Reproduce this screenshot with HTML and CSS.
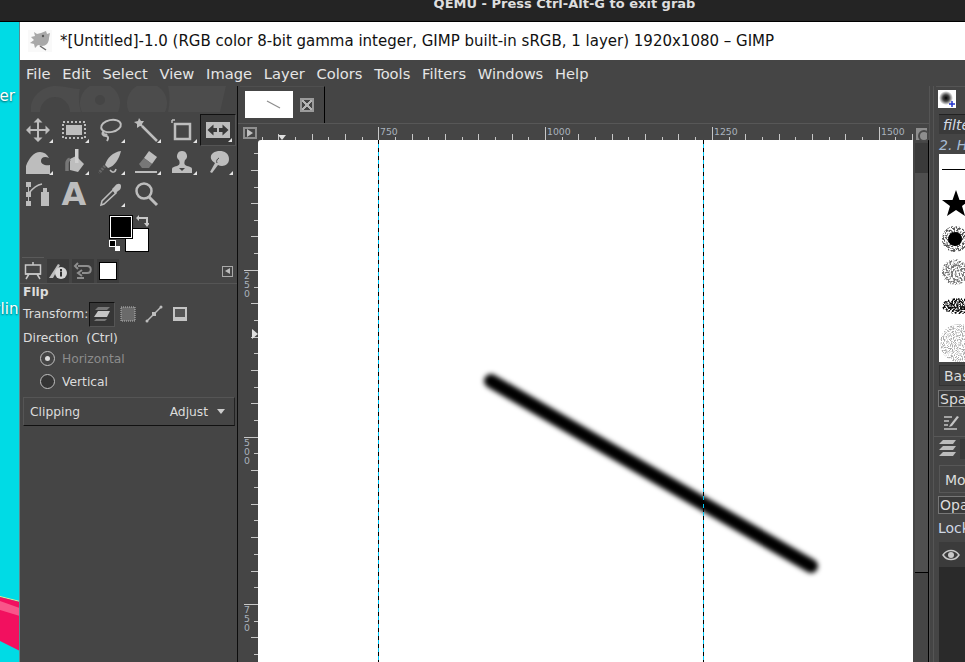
FILE: index.html
```html
<!DOCTYPE html>
<html lang="en">
<head>
  <meta charset="UTF-8">
  <title>GIMP</title>
  <link rel="stylesheet" href="styles.css">
</head>
<body>
  <div class="qemu-bar"><span>QEMU - Press Ctrl-Alt-G to exit grab</span></div>

  <div class="desktop">
    <div class="wallpaper">
      <span class="desk-label desk-label-1">Trash ter</span>
      <span class="desk-label desk-label-2">Styling</span>
      <svg class="wall-shape" viewBox="0 0 20 70" width="20" height="70">
        <polygon points="0,2 20,7 20,8 0,3" fill="#f4e98a"/>
        <polygon points="0,3 20,8 20,57 0,47" fill="#f2105f"/>
        <polygon points="0,7 20,14 20,22 0,16" fill="#f9558a"/>
      </svg>
    </div>

    <div class="window">
      <div class="titlebar">
        <svg class="wilber" viewBox="0 0 24 22" width="24" height="22">
          <rect width="24" height="22" fill="#f9f9f9"/>
          <path d="M6 2l3 2 4-1 5-2 1 3 3-1-1 5c0 5-3 8-7 8l-4-1-3 3-1-4-4-1 4-3-3-3 4-1z" fill="#a8a8a8"/>
          <path d="M12 16l6 4" stroke="#6d6d6d" stroke-width="1.500"/>
          <circle cx="15" cy="6" r="1.200" fill="#555"/>
        </svg>
        <span>*[Untitled]-1.0 (RGB color 8-bit gamma integer, GIMP built-in sRGB, 1 layer) 1920x1080 – GIMP</span>
      </div>

      <div class="menubar">
        <span>File</span><span>Edit</span><span>Select</span><span>View</span><span>Image</span><span>Layer</span><span>Colors</span><span>Tools</span><span>Filters</span><span>Windows</span><span>Help</span>
      </div>

      <div class="workspace">
        <div class="dock-left">
          <svg class="wilber-band" viewBox="0 0 218 28" width="218" height="28">
            <g fill="#4c4c4c">
              <path d="M11 26v-6C13 8 24 0 36 0c10 0 15 3 24 3-2 6-1 16 1 23H50a15 15 0 0 0-30 0z"/>
              <path d="M62 26a20 20 0 1 1 36 0zM75 14a5 5 0 1 0 10 0 5 5 0 1 0-10 0z" fill-rule="evenodd"/>
              <path d="M109 26a20 20 0 1 1 36 0z"/>
              <path d="M148 0h58l-6 26h-52c2-9 2-18 0-26z"/>
            </g>
          </svg>

          <div class="tools">
            <div class="tool has-menu"><svg class="ico" viewBox="0 0 24 24"><path d="M12 0l4.500 4.500H13V11h6.500V7.500L24 12l-4.500 4.500V13H13v6.500h3.500L12 24l-4.500-4.500H11V13H4.500v3.500L0 12l4.500-4.500V11H11V4.500H7.500z"/></svg></div>
            <div class="tool has-menu"><svg class="ico" viewBox="0 0 24 24"><rect x="1" y="4" width="22" height="16" fill="none" stroke="#bdbdbd" stroke-width="2" stroke-dasharray="2 2"/><rect x="4" y="7" width="16" height="10"/></svg></div>
            <div class="tool has-menu"><svg class="ico" viewBox="0 0 24 24"><g fill="none" stroke="#bdbdbd" stroke-width="2"><ellipse cx="13" cy="8" rx="10" ry="6" transform="rotate(-12 13 8)"/><path d="M6 13c-3 3-1 5 2 5 2 0 3 2 1 5"/><path d="M5 14c0 3 3 3 4 2"/></g></svg></div>
            <div class="tool has-menu"><svg class="ico" viewBox="0 0 24 24"><polygon points="5,0 7,3 10,3 8,6 9,9 6,8 3,10 3,6 0,4 4,3"/><path d="M8 8l15 15" stroke="#bdbdbd" stroke-width="2.500"/></svg></div>
            <div class="tool has-menu"><svg class="ico" viewBox="0 0 24 24"><g fill="none" stroke="#bdbdbd"><path d="M5 6h15v15H5z" stroke-width="2.500"/><path d="M2 2h3M2 2v3" stroke-width="1.500"/></g></svg></div>
            <div class="tool tool-active has-menu"><svg class="ico" viewBox="0 0 24 24"><rect x="0" y="4" width="24" height="16"/><path d="M1.500 12l6-5.500v3.500h3.500v4H7.500v3.500zM22.500 12l-6-5.500v3.500H13v4h3.500v3.500z" fill="#3a3a3a"/></svg></div>

            <div class="tool has-menu"><svg class="ico" viewBox="0 0 24 24"><path d="M0 24v-8C3 8 8 2 14 2c4 0 7 2 9 6-4-2-8-1-8 3 0 3 4 5 9 4v9z"/></svg></div>
            <div class="tool has-menu"><svg class="ico" viewBox="0 0 24 24"><path d="M8 9l6-3 8 8-6 8-8-2z"/><path d="M5 21v-8c0-2 1-3 3-4" fill="none" stroke="#777" stroke-width="3.500"/><rect x="13" y="-1" width="3.500" height="14" fill="#cfcfcf"/></svg></div>
            <div class="tool has-menu"><svg class="ico" viewBox="0 0 24 24"><path d="M23 1C15 2 9 8 7 15l3 3C17 16 21 9 23 1z"/><path d="M7 16l-6 7" stroke="#666" stroke-width="3" stroke-dasharray="2 1"/><path d="M12 20c2 3 5 3 6-1" fill="none" stroke="#bdbdbd" stroke-width="1.500"/></svg></div>
            <div class="tool has-menu"><svg class="ico" viewBox="0 0 24 24"><path d="M15 1l8 6-5 7-8-6z"/><path d="M10 8l8 6-3 4H8l-3-4z" fill="#777"/><rect x="1" y="21" width="22" height="2"/></svg></div>
            <div class="tool has-menu"><svg class="ico" viewBox="0 0 24 24"><path d="M12 1a5 5 0 0 1 3 9c-1 3-1 5 2 6s5 1 5 3v4H2v-4c0-2 2-2 5-3s3-3 2-6a5 5 0 0 1 3-9z"/><path d="M9 18h6l-3 3z" fill="#454545"/></svg></div>
            <div class="tool has-menu"><svg class="ico" viewBox="0 0 24 24"><path d="M7 3c6-4 16-2 16 6 0 7-7 8-11 6l-6 8-2-1 5-9C5 11 3 6 7 3z"/><path d="M13 8c-2 1-3 3-2 5" fill="none" stroke="#454545"/></svg></div>

            <div class="tool"><svg class="ico" viewBox="0 0 24 24"><rect x="0" y="0" width="5" height="5"/><rect x="0" y="10" width="5" height="5"/><rect x="0" y="19" width="5" height="5"/><path d="M2.500 3v18" stroke="#bdbdbd"/><path d="M3 11C7 6 11 3 16 2" fill="none" stroke="#bdbdbd" stroke-width="1.500"/><path d="M15 10h2V6h4v4h2v14h-8z"/></svg></div>
            <div class="tool tool-text">A</div>
            <div class="tool has-menu"><svg class="ico" viewBox="0 0 24 24"><path d="M3 23l1-4L15 8l3 3L6 22z" fill="none" stroke="#bdbdbd" stroke-width="1.500"/><path d="M14 7l3-3c2-3 6-3 6 0s-1 4-3 5l-3 3z"/></svg></div>
            <div class="tool"><svg class="ico" viewBox="0 0 24 24"><circle cx="10" cy="9" r="7.500" fill="none" stroke="#bdbdbd" stroke-width="2.500"/><path d="M15 15l8 8" stroke="#bdbdbd" stroke-width="3"/></svg></div>
          </div>

          <div class="colors">
            <div class="swatch swatch-bg"></div>
            <div class="swatch swatch-fg"></div>
            <div class="mini-default"></div>
            <svg class="swap" viewBox="0 0 13 13" width="13" height="13"><path d="M0 3l3-3v2h9v6h2l-3 4-3-4h2V4H3v2z" fill="#c8c8c8"/></svg>
          </div>

          <div class="dock-tabs">
            <div class="dock-tab dock-tab-on"><svg viewBox="0 0 18 18" width="18" height="18"><g fill="none" stroke="#c8c8c8" stroke-width="1.500"><rect x="1.500" y="3" width="15" height="9"/><path d="M9 0v3M5 12l-3 5M13 12l3 5M1 12h16"/></g></svg></div>
            <div class="dock-tab"><svg viewBox="0 0 20 18" width="20" height="18"><path d="M1 16l9-14 2 1-7 13z" fill="#bdbdbd"/><circle cx="13" cy="11" r="6" fill="#d6d6d6"/><rect x="12" y="9.500" width="2" height="5" fill="#333"/><rect x="12" y="7" width="2" height="2" fill="#333"/></svg></div>
            <div class="dock-tab"><svg viewBox="0 0 20 18" width="20" height="18"><g fill="none" stroke="#8e8e8e" stroke-width="2"><path d="M5 4h9c5 0 5 7 0 7H9"/><path d="M5 1L2 4l3 3M9 8l-4 3 4 3"/><path d="M4 16h7"/></g></svg></div>
            <div class="dock-tab"><div class="tab-thumb"></div></div>
            <div class="dock-tabs-end"><div class="dock-menu-btn"></div></div>
          </div>

          <div class="options">
            <div class="opt-title">Flip</div>
            <div class="opt-row">
              <span>Transform:</span>
              <div class="mode mode-on"><svg viewBox="0 0 18 18" width="18" height="18"><path d="M5 2h12l-3 3H2z" fill="#777"/><path d="M5 6h12l-3 6H1z" fill="#c4c4c4"/><path d="M3 14h11l-2 2H1z" fill="#777"/></svg></div>
              <div class="mode"><svg viewBox="0 0 16 16" width="16" height="16"><rect x="1" y="1" width="14" height="14" fill="#6a6a6a" stroke="#bbb" stroke-dasharray="1 1"/></svg></div>
              <div class="mode"><svg viewBox="0 0 18 18" width="18" height="18"><path d="M2 16L16 2" stroke="#bdbdbd" stroke-width="1.500"/><rect x="7" y="7" width="4" height="4" fill="#bdbdbd"/><circle cx="2" cy="16" r="1.500" fill="#bdbdbd"/><circle cx="16" cy="2" r="1.500" fill="#bdbdbd"/></svg></div>
              <div class="mode"><svg viewBox="0 0 16 16" width="16" height="16"><rect x="1" y="1" width="14" height="14" fill="#c4c4c4"/><rect x="3" y="3" width="10" height="8" fill="#555"/></svg></div>
            </div>
            <div class="opt-label">Direction  (Ctrl)</div>
            <div class="radio radio-on"><i></i><span>Horizontal</span></div>
            <div class="radio"><i></i><span>Vertical</span></div>
            <div class="opt-combo">
              <span>Clipping</span>
              <span class="combo-value">Adjust <b></b></span>
            </div>
          </div>
        </div>

        <div class="image-area">
          <div class="img-tabs">
            <div class="img-tab">
              <div class="img-thumb"><svg viewBox="0 0 48 27" width="48" height="27"><path d="M22 10l13 7" stroke="#8d8d8d" stroke-width="1.200"/></svg></div>
              <div class="img-close"></div>
            </div>
          </div>
          <div class="img-grid">
            <div class="corner-btn"><div class="corner-inner"></div></div>
            <svg class="ruler-top" viewBox="258 124 655 16" width="655" height="16">
              <path class="tick" d="M378.500 127v13M545.500 127v13M712.500 127v13M879.500 127v13"/>
              <path class="tick" d="M278.500 134v6M312.500 134v6M345.500 134v6M412.500 134v6M445.500 134v6M478.500 134v6M512.500 134v6M578.500 134v6M612.500 134v6M645.500 134v6M678.500 134v6M745.500 134v6M779.500 134v6M812.500 134v6M845.500 134v6M912.500 134v6"/>
              <path class="tick" d="M262.500 137v3M295.500 137v3M328.500 137v3M362.500 137v3M395.500 137v3M428.500 137v3M462.500 137v3M495.500 137v3M528.500 137v3M562.500 137v3M595.500 137v3M628.500 137v3M662.500 137v3M695.500 137v3M729.500 137v3M762.500 137v3M795.500 137v3M829.500 137v3M862.500 137v3M895.500 137v3"/>
              <polygon points="278,135 286,135 282,140" fill="#e0e0e0"/>
              <g class="ruler-num">
                <text x="380" y="135">750</text>
                <text x="547" y="135">1000</text>
                <text x="714" y="135">1250</text>
                <text x="881" y="135">1500</text>
              </g>
            </svg>
            <div class="nav-btn"><div class="nav-ring"></div></div>

            <svg class="ruler-left" viewBox="238 140 20 522" width="20" height="522">
              <path class="tick" d="M244 270.500h14M244 437.500h14M244 604.500h14"/>
              <path class="tick" d="M251 170.500h7M251 203.500h7M251 236.500h7M251 303.500h7M251 337.500h7M251 370.500h7M251 403.500h7M251 470.500h7M251 504.500h7M251 537.500h7M251 571.500h7M251 637.500h7"/>
              <path class="tick" d="M254 153.500h4M254 187.500h4M254 220.500h4M254 253.500h4M254 287.500h4M254 320.500h4M254 353.500h4M254 387.500h4M254 420.500h4M254 453.500h4M254 487.500h4M254 520.500h4M254 554.500h4M254 587.500h4M254 621.500h4M254 654.500h4"/>
              <polygon points="252,329 258,334 252,339" fill="#e0e0e0"/>
              <g class="ruler-num">
                <text x="244" y="279">2</text><text x="244" y="288">5</text><text x="244" y="297">0</text>
                <text x="244" y="446">5</text><text x="244" y="455">0</text><text x="244" y="464">0</text>
                <text x="244" y="613">7</text><text x="244" y="622">5</text><text x="244" y="631">0</text>
              </g>
            </svg>

            <div class="canvas">
              <svg class="stroke" viewBox="0 0 655 522" width="655" height="522">
                <defs><filter id="soft" x="-10%" y="-10%" width="120%" height="120%"><feGaussianBlur stdDeviation="2.500"/></filter></defs>
                <line x1="233" y1="241" x2="553" y2="426" stroke="#000" stroke-width="14" stroke-linecap="round" filter="url(#soft)"/>
              </svg>
              <div class="guide guide-1"></div>
              <div class="guide guide-2"></div>
            </div>

            <div class="scroll-v"><div class="scroll-thumb"></div></div>
          </div>
        </div>

        <div class="dock-right">
          <div class="r-tabs">
            <div class="r-brush-tab"><svg viewBox="0 0 18 18" width="18" height="18"><defs><radialGradient id="dot"><stop offset="0" stop-color="#000"/><stop offset=".45" stop-color="#444"/><stop offset="1" stop-color="#fff"/></radialGradient></defs><rect width="18" height="18" fill="#fff"/><circle cx="8" cy="8" r="7" fill="url(#dot)"/><path d="M14 11v6M11 14h6" stroke="#2233cc" stroke-width="1.500"/></svg></div>
          </div>
          <div class="r-filter">filter</div>
          <div class="r-caption">2. Hardness 050</div>
          <div class="r-brushes">
            <svg viewBox="0 0 26 208" width="26" height="208">
              <defs>
                <filter id="noisy" x="0" y="0" width="100%" height="100%"><feTurbulence type="fractalNoise" baseFrequency=".55" numOctaves="2" seed="4" result="n"/><feColorMatrix in="n" type="matrix" values="0 0 0 0 0 0 0 0 0 0 0 0 0 0 0 0 0 0 6 -2.600" result="t"/><feComposite in="SourceGraphic" in2="t" operator="in"/></filter>
                <filter id="noisy2" x="0" y="0" width="100%" height="100%"><feTurbulence type="fractalNoise" baseFrequency=".9" numOctaves="1" seed="9" result="n"/><feColorMatrix in="n" type="matrix" values="0 0 0 0 0 0 0 0 0 0 0 0 0 0 0 0 0 0 6 -2.800" result="t"/><feComposite in="SourceGraphic" in2="t" operator="in"/></filter>
              </defs>
              <rect x="3" y="15" width="23" height="1" fill="#000"/>
              <polygon points="17,36 20.500,46 31,46 23,52 26,62 17,56 8,62 11,52 3,46 13.500,46"/>
              <circle cx="16" cy="85" r="13" fill="#555" filter="url(#noisy)"/>
              <circle cx="16" cy="85" r="7" fill="#000"/>
              <circle cx="16" cy="118" r="13" fill="#777" filter="url(#noisy)"/>
              <ellipse cx="20" cy="152" rx="17" ry="8" fill="#000" filter="url(#noisy)"/>
              <ellipse cx="20" cy="152" rx="16" ry="6" fill="#222" filter="url(#noisy2)"/>
              <circle cx="20" cy="189" r="19" fill="#aaa" filter="url(#noisy2)"/>
            </svg>
          </div>
          <div class="r-combo">Basic,</div>
          <div class="r-spin">Spacing</div>
          <div class="r-edit"><svg viewBox="0 0 16 16" width="16" height="16"><path d="M1 3h8M1 7h5M1 11h4M1 15h13" stroke="#c4c4c4" stroke-width="1.500"/><path d="M7 11l7-9 2 1-7 9-3 1z" fill="#c4c4c4"/></svg></div>
          <div class="r-sep"></div>
          <div class="r-tabs r-tabs-2">
            <div class="r-layer-tab"><svg viewBox="0 0 17 18" width="17" height="18"><path d="M4 1h13l-3 4H0z" fill="#bdbdbd"/><path d="M4 7h13l-3 4H0z" fill="#bdbdbd"/><path d="M4 13h13l-3 4H0z" fill="#bdbdbd"/></svg></div>
            <div class="r-tab-stub"></div>
          </div>
          <div class="r-combo r-mode">Mode</div>
          <div class="r-spin r-opacity">Opacity</div>
          <div class="r-lock">Lock:</div>
          <div class="r-layer"><svg viewBox="0 0 18 12" width="18" height="12"><path d="M1 6c4-6 12-6 16 0-4 6-12 6-16 0z" fill="none" stroke="#c8c8c8" stroke-width="1.500"/><circle cx="9" cy="6" r="3" fill="#c8c8c8"/></svg></div>
          <div class="r-list"></div>
        </div>
      </div>
    </div>
  </div>
</body>
</html>
```

FILE: styles.css
```css
* { box-sizing: border-box; }
html, body { margin: 0; height: 100%; }
body { width: 965px; height: 662px; overflow: hidden; display: flex; flex-direction: column; font-family: "DejaVu Sans", sans-serif; background: #242424; }

.qemu-bar { height: 22px; background: #242424; border-bottom: 1px solid #000; text-align: center; overflow: hidden; padding-left: 164px; color: #dedede; font-size: 13px; font-weight: bold; line-height: 8px; }

.desktop { flex: 1; display: flex; min-height: 0; }
.wallpaper { width: 20px; background: #00dbe5; position: relative; overflow: hidden; border-right: 1px solid #5a8a90; }
.desk-label { position: absolute; color: #fff; font-size: 15px; white-space: nowrap; text-shadow: 0 1px 2px rgba(0, 0, 0, .6); }
.desk-label-1 { top: 65px; right: 4px; }
.desk-label-2 { top: 278px; right: -9px; }
.wall-shape { position: absolute; left: 0; top: 572px; }

.window { flex: 1; display: flex; flex-direction: column; min-width: 0; }
.titlebar { height: 38px; background: #fff; display: flex; align-items: center; padding-left: 8px; gap: 8px; font-size: 15px; color: #111; white-space: nowrap; }
.menubar { height: 26px; background: #454545; display: flex; align-items: center; padding-left: 6px; gap: 11.800px; font-size: 14.670px; color: #e6e6e6; }

.workspace { flex: 1; display: flex; min-height: 0; background: #454545; color: #dcdcdc; }

/* left dock */
.dock-left { width: 218px; border-right: 1px solid #0c0c0c; display: flex; flex-direction: column; }
.wilber-band { display: block; flex: none; }
.tools { display: grid; grid-template-columns: repeat(6, 36px); grid-auto-rows: 32px; flex: none; }
.tool { position: relative; display: flex; align-items: center; justify-content: center; }
.ico { width: 24px; height: 24px; fill: #bdbdbd; display: block; overflow: visible; }
.tool.has-menu::after { content: ""; position: absolute; right: 3px; bottom: 3px; border-style: solid; border-width: 0 0 4px 4px; border-color: transparent transparent #e4e4e4 transparent; }
.tool-active { background: #3a3a3a; border: 1px solid #555; border-top: 1px solid #111; border-left: 1px solid #111; }
.tool-text { font-size: 32px; font-weight: bold; color: #bdbdbd; line-height: 32px; }

.colors { height: 48px; position: relative; flex: none; }
.swatch { position: absolute; width: 24px; height: 24px; border: 1px solid #000; }
.swatch-fg { left: 89px; top: 5px; background: #000; outline: 1px solid #fff; outline-offset: -2px; }
.swatch-bg { left: 105px; top: 18px; background: #fff; }
.mini-default { position: absolute; left: 89px; top: 30px; width: 7px; height: 7px; background: #000; border: 1px solid #fff; box-shadow: 5px 5px 0 -1px #fff; }
.swap { position: absolute; left: 116px; top: 5px; }

.dock-tabs { height: 26px; display: flex; align-items: flex-end; gap: 3px; padding-left: 2px; border-bottom: 1px solid #555; flex: none; }
.dock-tab { width: 22px; height: 24px; background: #3b3b3b; display: flex; align-items: center; justify-content: center; }
.dock-tab-on { background: #454545; border-top: 1px solid #5a5a5a; height: 26px; }
.tab-thumb { width: 18px; height: 18px; background: #fff; border: 1px solid #000; }
.dock-tabs-end { margin-left: auto; padding: 0 4px 6px 0; }
.dock-menu-btn { width: 11px; height: 11px; border: 1px solid #aaa; position: relative; }
.dock-menu-btn::after { content: ""; position: absolute; left: 2px; top: 1px; border-style: solid; border-width: 3.500px 5px 3.500px 0; border-color: transparent #bbb transparent transparent; }

.options { padding: 0 2px 0 3px; font-size: 12.300px; }
.opt-title { font-weight: bold; height: 17px; line-height: 17px; }
.opt-row { display: flex; align-items: center; height: 26px; }
.mode { width: 26px; height: 25px; display: flex; align-items: center; justify-content: center; }
.mode-on { background: #363636; border: 1px solid #111; border-right-color: #555; border-bottom-color: #555; margin-left: 1px; }
.opt-label { margin-top: 3px; height: 17px; line-height: 17px; white-space: pre; }
.radio { display: flex; align-items: center; gap: 7px; height: 23px; padding-left: 17px; }
.radio i { width: 15px; height: 15px; border-radius: 50%; border: 1px solid #c0c0c0; background: #353535; position: relative; }
.radio-on i { background: #454545; }
.radio-on i::after { content: ""; position: absolute; left: 4px; top: 4px; width: 5px; height: 5px; border-radius: 50%; background: #ddd; }
.radio-on span { color: #8c8c8c; }
.opt-combo { margin-top: 4px; height: 29px; display: flex; align-items: center; justify-content: space-between; padding: 0 9px 0 6px; border: 1px solid #555; border-bottom: 1px solid #111; border-right-color: #222; }
.combo-value b { display: inline-block; width: 0; height: 0; margin-left: 5px; border-style: solid; border-width: 5px 4.500px 0; border-color: #ccc transparent transparent; vertical-align: 2px; }

/* image window */
.image-area { width: 692px; display: flex; flex-direction: column; border-right: 1px solid #555; }
.img-tabs { height: 38px; border-bottom: 1px solid #575757; display: flex; padding-left: 2px; flex: none; }
.img-tab { width: 85px; border-right: 1px solid #000; border-top: 1px solid #4f4f4f; display: flex; align-items: center; gap: 7px; padding: 0 0 1px 5px; }
.img-thumb { width: 48px; height: 27px; background: #fff; }
.img-thumb svg { display: block; }
.img-close { width: 14px; height: 14px; border: 2px solid #9a9a9a; position: relative; background: linear-gradient(45deg, transparent 44%, #b5b5b5 44%, #b5b5b5 56%, transparent 56%), linear-gradient(-45deg, transparent 44%, #b5b5b5 44%, #b5b5b5 56%, transparent 56%); }

.img-grid { flex: 1; display: grid; grid-template-columns: 20px 655px 16px; grid-template-rows: 16px 522px; min-height: 0; overflow: hidden; }
.corner-btn { padding: 3px 1px 1px 5px; }
.corner-inner { width: 14px; height: 12px; border: 2px solid #8f8f8f; position: relative; }
.corner-inner::after { content: ""; position: absolute; left: 2px; top: 0; border-style: solid; border-width: 4px 0 4px 6px; border-color: transparent transparent transparent #c0c0c0; }
.ruler-top, .ruler-left { display: block; }
.tick { stroke: #c8c8c8; stroke-width: 1; fill: none; shape-rendering: crispEdges; }
.ruler-num { font-size: 9.330px; fill: #a9b2bc; }
.nav-btn { padding: 4px 2px 0 3px; }
.nav-ring { width: 11px; height: 12px; background: #8e8e8e; position: relative; }
.nav-ring::after { content: ""; position: absolute; left: 2px; top: 2px; width: 8px; height: 8px; border-radius: 50%; border: 2px solid #4a4a4a; }

.canvas { position: relative; background: #fff; border-top-left-radius: 3px; overflow: hidden; }
.stroke { position: absolute; left: 0; top: 0; }
.guide { position: absolute; top: 0; bottom: 0; width: 1px; background: repeating-linear-gradient(#000 0 4px, #00c8f8 4px 8px); }
.guide-1 { left: 120px; }
.guide-2 { left: 445px; }

.scroll-v { padding: 3px 0 0 2px; background: #454545; border-right: 1px solid #000; }
.scroll-thumb { height: 430px; width: 13px; background: linear-gradient(#3a3a3a 0 30px, #4f4f4f 30px); border-bottom: 1px solid #000; }

/* right dock */
.dock-right { flex: 1; min-width: 0; overflow: hidden; padding-left: 2px; margin-left: 3px; border-left: 1px solid #555; font-size: 14px; color: #dcdcdc; display: flex; flex-direction: column; white-space: nowrap; }
.r-tabs { height: 27px; padding: 3px 0 0 2px; border-top: 1px solid #555; flex: none; }
.r-brush-tab svg, .r-layer-tab svg { display: block; }
.r-filter { height: 20px; line-height: 20px; background: #3a3a3a; border-top: 1px solid #222; font-style: italic; padding-left: 4px; margin: 1px 0 0 3px; color: #d4dae4; }
.r-caption { height: 20px; line-height: 23px; font-style: italic; color: #a8bcd4; margin-left: 3px; }
.r-brushes { height: 208px; background: #fff; margin-left: 3px; flex: none; overflow: hidden; }
.r-brushes svg { display: block; overflow: hidden; }
.r-combo { margin: 3px 0 0 3px; height: 21px; line-height: 21px; padding-left: 4px; border: 1px solid #333; border-right: 0; background: #3f3f3f; flex: none; }
.r-spin { margin: 4px 0 0 2px; height: 17px; line-height: 17px; border: 1px solid #777; border-right: 0; padding-left: 1px; background: #3a3a3a; flex: none; }
.r-edit { height: 29px; padding: 7px 0 0 7px; flex: none; }
.r-edit svg { display: block; }
.r-sep { height: 1px; background: #585858; margin-left: -2px; flex: none; }
.r-tabs-2 { display: flex; gap: 4px; border-top: 0; height: 25px; padding: 2px 0 0 3px; }
.r-tab-stub { width: 12px; height: 20px; background: #3a3a3a; }
.r-mode { height: 28px; line-height: 28px; background: #454545; border: 1px solid #575757; border-right: 0; padding-left: 5px; margin-top: 3px; }
.r-opacity { margin-top: 3px; height: 18px; padding-left: 1px; }
.r-lock { height: 22px; line-height: 22px; margin: 3px 0 0 2px; flex: none; color: #cfd8e4; }
.r-layer { height: 25px; margin: 3px 0 0 3px; padding: 7px 0 0 3px; background: #3b3b3b; flex: none; }
.r-layer svg { display: block; }
.r-list { flex: 1; background: #2a2a2a; margin-left: 3px; }
```
